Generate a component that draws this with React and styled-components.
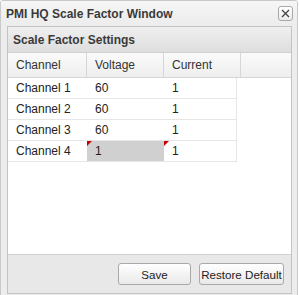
import React from "react";
import styled, { createGlobalStyle } from "styled-components";

const Global = createGlobalStyle`
  html, body { margin: 0; padding: 0; background: #ffffff; }
  body { font-family: "Liberation Sans", Arial, sans-serif; font-size: 12px; color: #222; }
`;

const Window = styled.div`
  box-sizing: border-box;
  width: 298px;
  height: 295px;
  border: 1px solid #c9c9c9;
  border-bottom: none;
  border-radius: 3px 3px 0 0;
  background: #ededed;
  display: flex;
  flex-direction: column;
  padding: 0 5px 1px 6px;
`;

const TitleBar = styled.div`
  height: 25px;
  display: flex;
  align-items: center;
  justify-content: space-between;
  margin: 0 -5px 0 -6px;
  padding: 0 4px 0 5px;
  background: linear-gradient(#f6f6f6, #ececec);
`;

const Title = styled.div`
  font-weight: bold;
  font-size: 12px;
  color: #3a3a3a;
`;

const CloseButton = styled.div`
  box-sizing: border-box;
  width: 15px;
  height: 15px;
  border: 1px solid #a8a8a8;
  border-radius: 3px;
  background: linear-gradient(#ffffff, #ebebeb);
  display: flex;
  align-items: center;
  justify-content: center;
`;

const Panel = styled.div`
  flex: 1;
  display: flex;
  flex-direction: column;
  border: 1px solid #c3c3c3;
  background: #ffffff;
  min-height: 0;
`;

const PanelHeader = styled.div`
  height: 25px;
  display: flex;
  align-items: center;
  padding-left: 5px;
  font-weight: bold;
  font-size: 12px;
  color: #3a3a3a;
  background: linear-gradient(#efefef, #dedede);
  border-bottom: 1px solid #d0d0d0;
`;

const Grid = styled.div`
  flex: 1;
  display: flex;
  flex-direction: column;
  background: #ffffff;
`;

const HeaderRow = styled.div`
  display: flex;
  height: 24px;
  background: linear-gradient(#fafafa, #eeeeee);
  border-bottom: 1px solid #d6d6d6;
`;

const HeaderCell = styled.div`
  box-sizing: border-box;
  width: ${(p) => p.$w}px;
  flex: ${(p) => (p.$grow ? 1 : "none")};
  display: flex;
  align-items: center;
  padding-left: 8px;
  color: #333;
  border-right: ${(p) => (p.$grow ? "none" : "1px solid #d6d6d6")};
`;

const Row = styled.div`
  display: flex;
  width: 228px;
  height: 20px;
  border-bottom: 1px solid #e6e6e6;
  border-right: 1px solid #e6e6e6;
`;

const Cell = styled.div`
  position: relative;
  box-sizing: border-box;
  width: ${(p) => p.$w}px;
  display: flex;
  align-items: center;
  padding-left: 8px;
  color: #222;
  background: ${(p) => (p.$selected ? "#d0d0d0" : "transparent")};
`;

const Dirty = styled.span`
  position: absolute;
  left: 0;
  top: 0;
  width: 0;
  height: 0;
  border-top: 5px solid #c00000;
  border-right: 5px solid transparent;
`;

const Footer = styled.div`
  height: 38px;
  display: flex;
  align-items: center;
  justify-content: flex-end;
  gap: 8px;
  padding-right: 7px;
  background: #e8e8e8;
  border-top: 1px solid #d0d0d0;
`;

const Button = styled.button`
  box-sizing: border-box;
  height: 22px;
  width: ${(p) => p.$w}px;
  padding: 0;
  border: 1px solid #a9a9a9;
  border-radius: 3px;
  background: linear-gradient(#ffffff, #e9e9e9);
  font-family: "Liberation Sans", Arial, sans-serif;
  font-size: 11.6px;
  color: #222;
`;

const rows = [
  { ch: "Channel 1", v: "60", c: "1" },
  { ch: "Channel 2", v: "60", c: "1" },
  { ch: "Channel 3", v: "60", c: "1" },
  { ch: "Channel 4", v: "1", c: "1", dirty: true },
];

export default function App() {
  return (
    <>
      <Global />
      <Window>
        <TitleBar>
          <Title>PMI HQ Scale Factor Window</Title>
          <CloseButton>
            <svg width="9" height="9" viewBox="0 0 9 9">
              <path d="M1 1L8 8M8 1L1 8" stroke="#444" strokeWidth="1.3" />
            </svg>
          </CloseButton>
        </TitleBar>
        <Panel>
          <PanelHeader>Scale Factor Settings</PanelHeader>
          <Grid>
            <HeaderRow>
              <HeaderCell $w={79}>Channel</HeaderCell>
              <HeaderCell $w={77}>Voltage</HeaderCell>
              <HeaderCell $w={77}>Current</HeaderCell>
              <HeaderCell $grow />
            </HeaderRow>
            {rows.map((r) => (
              <Row key={r.ch}>
                <Cell $w={79}>{r.ch}</Cell>
                <Cell $w={77} $selected={r.dirty}>
                  {r.dirty && <Dirty />}
                  {r.v}
                </Cell>
                <Cell $w={72}>
                  {r.dirty && <Dirty />}
                  {r.c}
                </Cell>
              </Row>
            ))}
          </Grid>
          <Footer>
            <Button $w={73}>Save</Button>
            <Button $w={85}>Restore Default</Button>
          </Footer>
        </Panel>
      </Window>
    </>
  );
}
